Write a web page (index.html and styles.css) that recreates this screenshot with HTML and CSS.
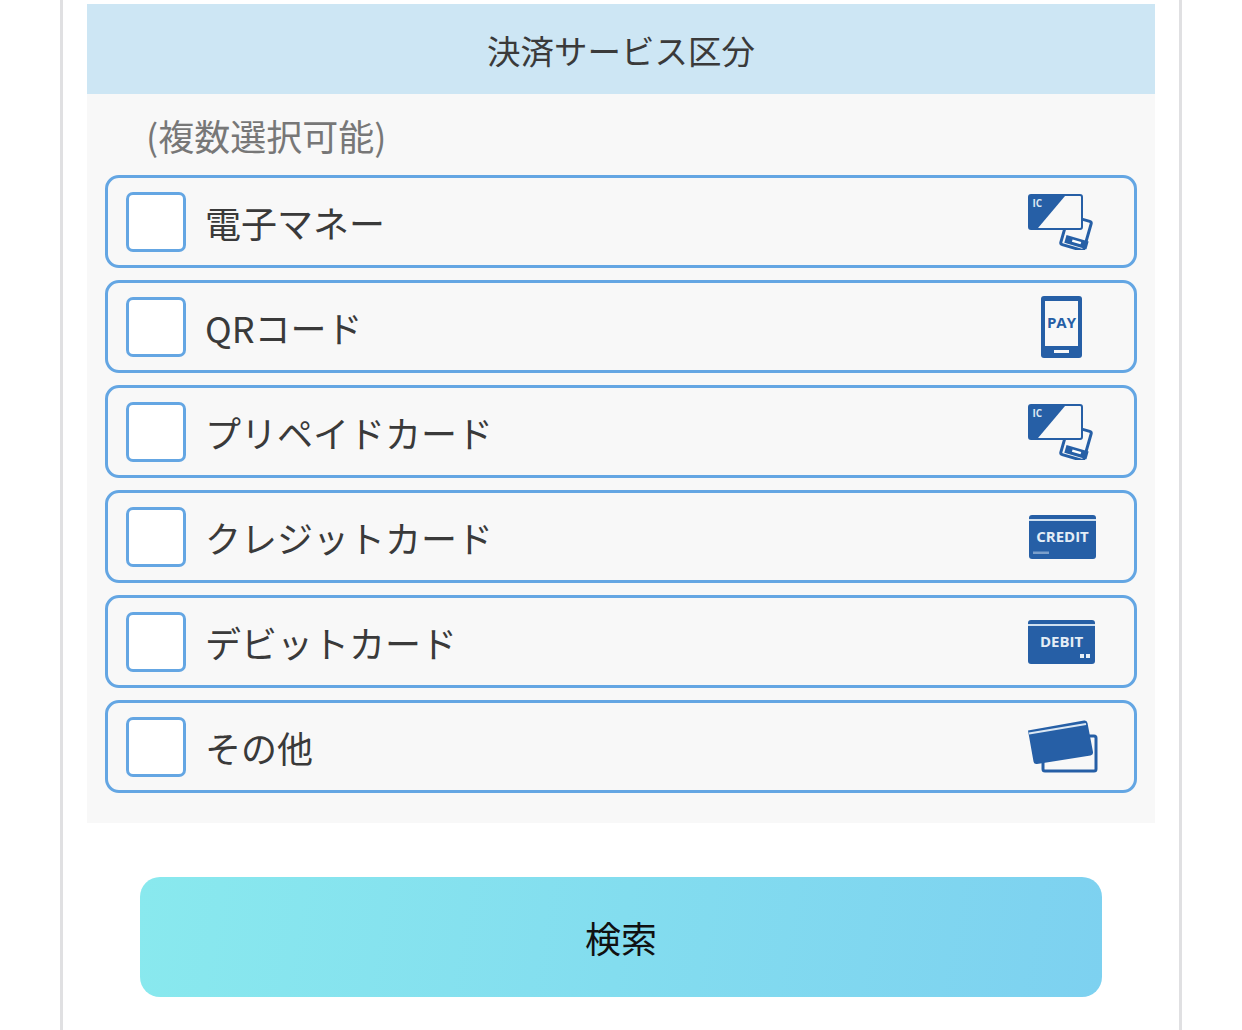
FILE: index.html
```html
<!DOCTYPE html>
<html lang="ja">
<head>
    <meta charset="UTF-8">
    <meta name="viewport" content="width=device-width, initial-scale=1.0">
    <title>決済サービス区分</title>
    <link rel="stylesheet" href="styles.css">
</head>
<body>
    <div class="container">
        <section class="panel">
            <h2 class="panel-title">決済サービス区分</h2>
            <div class="panel-body">
                <p class="note">(複数選択可能)</p>
                <ul class="service-list">
                    <li class="service-item">
                        <span class="checkbox"></span>
                        <span class="service-name">電子マネー</span>
                        <svg class="service-icon" viewBox="0 0 72 56">
                            <rect x="38" y="24" width="24" height="30" rx="2" transform="rotate(16 50 39)" fill="#f8f8f8" stroke="#265fa6" stroke-width="3"/>
                            <rect x="39" y="44" width="23" height="8" transform="rotate(16 50 48)" fill="#265fa6"/>
                            <rect x="46" y="46.5" width="9" height="2.5" transform="rotate(16 50 48)" fill="#fff"/>
                            <rect x="3" y="1" width="53" height="34" rx="2" fill="#f8f8f8" stroke="#265fa6" stroke-width="2"/>
                            <path d="M4 2H39L12 34H4Z" fill="#265fa6"/>
                            <text class="icon-text" x="6.500" y="13" font-size="10">IC</text>
                        </svg>
                    </li>
                    <li class="service-item">
                        <span class="checkbox"></span>
                        <span class="service-name">QRコード</span>
                        <svg class="service-icon" viewBox="0 0 72 64">
                            <rect x="15" y="1" width="41" height="62" rx="3" fill="#265fa6"/>
                            <rect x="19" y="6" width="33" height="45" fill="#f8f8f8"/>
                            <rect x="28" y="55" width="15" height="3" fill="#f8f8f8"/>
                            <text class="icon-pay" x="35.500" y="33" font-size="15">PAY</text>
                        </svg>
                    </li>
                    <li class="service-item">
                        <span class="checkbox"></span>
                        <span class="service-name">プリペイドカード</span>
                        <svg class="service-icon" viewBox="0 0 72 56">
                            <rect x="38" y="24" width="24" height="30" rx="2" transform="rotate(16 50 39)" fill="#f8f8f8" stroke="#265fa6" stroke-width="3"/>
                            <rect x="39" y="44" width="23" height="8" transform="rotate(16 50 48)" fill="#265fa6"/>
                            <rect x="46" y="46.5" width="9" height="2.500" transform="rotate(16 50 48)" fill="#fff"/>
                            <rect x="3" y="1" width="53" height="34" rx="2" fill="#f8f8f8" stroke="#265fa6" stroke-width="2"/>
                            <path d="M4 2H39L12 34H4Z" fill="#265fa6"/>
                            <text class="icon-text" x="6.500" y="13" font-size="10">IC</text>
                        </svg>
                    </li>
                    <li class="service-item">
                        <span class="checkbox"></span>
                        <span class="service-name">クレジットカード</span>
                        <svg class="service-icon" viewBox="0 0 72 48">
                            <rect x="3" y="2" width="67" height="44" rx="3" fill="#265fa6"/>
                            <rect x="3" y="6" width="62" height="2" x2="0" fill="#cfe0f0"/>
                            <rect x="3" y="6" width="67" height="2" fill="#cfe0f0"/>
                            <text class="icon-card" x="36.500" y="29" font-size="15">CREDIT</text>
                            <path d="M8 38.500V41M10 38.500V41M12 38.500V41M14 38.500V41M16 38.500V41M18 38.500V41M20 38.500V41M22 38.500V41" stroke="#cfe0f0" stroke-width="1"/>
                        </svg>
                    </li>
                    <li class="service-item">
                        <span class="checkbox"></span>
                        <span class="service-name">デビットカード</span>
                        <svg class="service-icon" viewBox="0 0 72 48">
                            <rect x="2" y="2" width="67" height="44" rx="3" fill="#265fa6"/>
                            <rect x="2" y="6" width="67" height="2" fill="#cfe0f0"/>
                            <text class="icon-card" x="35.500" y="29" font-size="15">DEBIT</text>
                            <rect x="54" y="36" width="4" height="4" fill="#e8f0f8"/>
                            <rect x="60" y="36" width="4" height="4" fill="#e8f0f8"/>
                        </svg>
                    </li>
                    <li class="service-item">
                        <span class="checkbox"></span>
                        <span class="service-name">その他</span>
                        <svg class="service-icon" viewBox="0 0 72 56">
                            <rect x="17" y="17" width="53" height="35" rx="2" fill="#f8f8f8" stroke="#265fa6" stroke-width="3"/>
                            <path d="M2 11.500L58 1.500Q61 1 61.500 4L67 33Q67.500 36 64.500 36.500L11 45Q8 45.500 7.500 42.500Z" fill="#265fa6"/>
                            <path d="M3 14.500L60 5" stroke="#dce8f4" stroke-width="2"/>
                        </svg>
                    </li>
                </ul>
            </div>
        </section>
        <div class="controls">
            <button class="search-btn">検索</button>
        </div>
    </div>
</body>
</html>
```

FILE: styles.css
```css
:root {
    --blue: #64a6e3;
    --navy: #265fa6;
    --text: #3a3a3a;
}

* {
    box-sizing: border-box;
    margin: 0;
    padding: 0;
    font-family: "Noto Sans CJK JP", "Noto Sans", sans-serif;
}

body {
    background-color: #fff;
    color: var(--text);
    height: 1030px;
    overflow: hidden;
}

.container {
    width: 1122px;
    height: 1030px;
    margin-left: 60px;
    padding: 4px 24px 0;
    border-left: 3px solid #e0e0e2;
    border-right: 3px solid #e0e0e2;
}

.panel {
    background-color: #f8f8f8;
}

.panel-title {
    height: 90px;
    background-color: #cde6f4;
    display: flex;
    align-items: center;
    justify-content: center;
    font-size: 33.500px;
    font-weight: 400;
}

.panel-body {
    padding: 0 18px 30px;
}

.note {
    height: 81px;
    display: flex;
    align-items: center;
    padding-left: 41px;
    font-size: 36px;
    color: #777;
}

.service-list {
    list-style: none;
    display: flex;
    flex-direction: column;
    gap: 12px;
}

.service-item {
    height: 93px;
    display: flex;
    align-items: center;
    padding: 0 36px 0 18px;
    background-color: #f8f8f8;
    border: 3px solid var(--blue);
    border-radius: 14px;
}

.checkbox {
    width: 60px;
    height: 60px;
    flex-shrink: 0;
    background-color: #fff;
    border: 3px solid var(--blue);
    border-radius: 7px;
}

.service-name {
    flex: 1;
    margin-left: 19px;
    font-size: 36px;
    line-height: 1;
}

.service-icon {
    width: 72px;
    height: auto;
    flex-shrink: 0;
}

.icon-text, .icon-pay, .icon-card {
    font-family: "Open Sans", sans-serif;
    font-weight: 700;
}

.icon-text {
    fill: #dbe7f3;
}

.icon-pay {
    fill: var(--navy);
    text-anchor: middle;
}

.icon-card {
    fill: #e4edf6;
    text-anchor: middle;
}

.controls {
    display: flex;
    justify-content: center;
    margin-top: 54px;
}

.search-btn {
    width: 962px;
    height: 120px;
    border: none;
    border-radius: 20px;
    background: linear-gradient(100deg, #89e9ee, #7dd1f0);
    color: #111;
    font-size: 36px;
}
```
